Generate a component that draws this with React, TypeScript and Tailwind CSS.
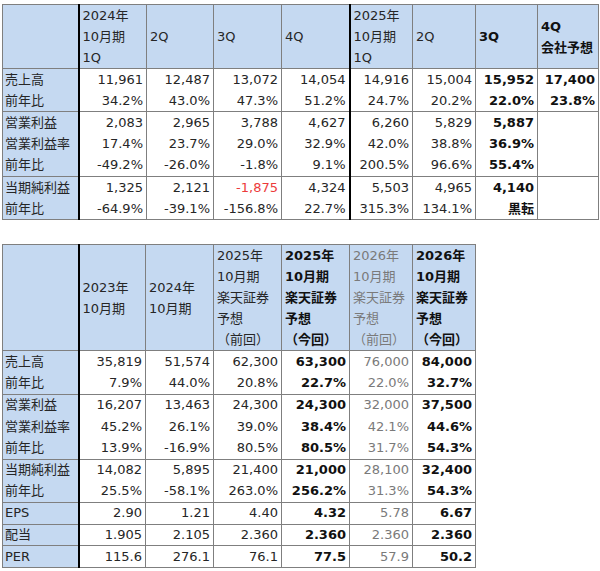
type Cell = string | { v: string; b?: boolean; red?: boolean }

const topCols = [76, 68, 67, 68, 68, 63, 63, 62, 61]
const bottomCols = [76, 67, 68, 68, 68, 63, 63]

const topHead: { lines: string[]; b?: boolean; thick?: boolean }[] = [
  { lines: ['2024年', '10月期', '1Q'] },
  { lines: ['2Q'] },
  { lines: ['3Q'] },
  { lines: ['4Q'], thick: true },
  { lines: ['2025年', '10月期', '1Q'] },
  { lines: ['2Q'] },
  { lines: ['3Q'], b: true },
  { lines: ['4Q', '会社予想'], b: true },
]

const topRows: { label: string; cells: Cell[]; end?: boolean }[] = [
  { label: '売上高', cells: ['11,961', '12,487', '13,072', '14,054', '14,916', '15,004', { v: '15,952', b: true }, { v: '17,400', b: true }] },
  { label: '前年比', cells: ['34.2%', '43.0%', '47.3%', '51.2%', '24.7%', '20.2%', { v: '22.0%', b: true }, { v: '23.8%', b: true }], end: true },
  { label: '営業利益', cells: ['2,083', '2,965', '3,788', '4,627', '6,260', '5,829', { v: '5,887', b: true }, ''] },
  { label: '営業利益率', cells: ['17.4%', '23.7%', '29.0%', '32.9%', '42.0%', '38.8%', { v: '36.9%', b: true }, ''] },
  { label: '前年比', cells: ['-49.2%', '-26.0%', '-1.8%', '9.1%', '200.5%', '96.6%', { v: '55.4%', b: true }, ''], end: true },
  { label: '当期純利益', cells: ['1,325', '2,121', { v: '-1,875', red: true }, '4,324', '5,503', '4,965', { v: '4,140', b: true }, ''] },
  { label: '前年比', cells: ['-64.9%', '-39.1%', '-156.8%', '22.7%', '315.3%', '134.1%', { v: '黒転', b: true }, ''], end: true },
]

const fc = ['2025年', '10月期', '楽天証券', '予想']
const bottomHead: { lines: string[]; b?: boolean; gray?: boolean }[] = [
  { lines: ['2023年', '10月期'] },
  { lines: ['2024年', '10月期'] },
  { lines: [...fc, '（前回）'] },
  { lines: [...fc, '（今回）'], b: true },
  { lines: ['2026年', '10月期', '楽天証券', '予想', '（前回）'], gray: true },
  { lines: ['2026年', '10月期', '楽天証券', '予想', '（今回）'], b: true },
]

const bottomRows: { label: string; v: string[]; end?: boolean }[] = [
  { label: '売上高', v: ['35,819', '51,574', '62,300', '63,300', '76,000', '84,000'] },
  { label: '前年比', v: ['7.9%', '44.0%', '20.8%', '22.7%', '22.0%', '32.7%'], end: true },
  { label: '営業利益', v: ['16,207', '13,463', '24,300', '24,300', '32,000', '37,500'] },
  { label: '営業利益率', v: ['45.2%', '26.1%', '39.0%', '38.4%', '42.1%', '44.6%'] },
  { label: '前年比', v: ['13.9%', '-16.9%', '80.5%', '80.5%', '31.7%', '54.3%'], end: true },
  { label: '当期純利益', v: ['14,082', '5,895', '21,400', '21,000', '28,100', '32,400'] },
  { label: '前年比', v: ['25.5%', '-58.1%', '263.0%', '256.2%', '31.3%', '54.3%'], end: true },
  { label: 'EPS', v: ['2.90', '1.21', '4.40', '4.32', '5.78', '6.67'], end: true },
  { label: '配当', v: ['1.905', '2.105', '2.360', '2.360', '2.360', '2.360'], end: true },
  { label: 'PER', v: ['115.6', '276.1', '76.1', '77.5', '57.9', '50.2'], end: true },
]

const font = { fontFamily: '"DejaVu Sans", "Noto Sans CJK JP", sans-serif' }

function Cols({ widths }: { widths: number[] }) {
  return (
    <colgroup>
      {widths.map((w, i) => (
        <col key={i} style={{ width: w }} />
      ))}
    </colgroup>
  )
}

function TopTable() {
  return (
    <table className="table-fixed border-collapse text-[13px] text-[#262626]" style={{ ...font, width: 596 }}>
      <Cols widths={topCols} />
      <thead>
        <tr>
          <th className="border border-[#7f7f7f] border-r-2 border-r-black bg-[#c5d9f1]" />
          {topHead.map((h, i) => (
            <th
              key={i}
              className={`h-[63px] border border-[#7f7f7f] bg-[#c5d9f1] pl-[3px] text-left align-middle leading-[21px] ${h.b ? 'font-bold text-[#111]' : 'font-normal'} ${h.thick ? 'border-r-2 border-r-black' : ''}`}
            >
              {h.lines.map((l, j) => (
                <div key={j}>{l}</div>
              ))}
            </th>
          ))}
        </tr>
      </thead>
      <tbody>
        {topRows.map((r, i) => (
          <tr key={i}>
            <td className={`h-[21.6px] border-x border-l-[#7f7f7f] border-r-2 border-r-black bg-[#c5d9f1] pl-[2px] leading-[20px] ${r.end ? 'border-b border-b-[#7f7f7f]' : ''}`}>
              {r.label}
            </td>
            {r.cells.map((c, j) => {
              const o = typeof c === 'string' ? { v: c } : c
              return (
                <td
                  key={j}
                  className={`h-[21.6px] border-x border-[#7f7f7f] pr-[3px] text-right leading-[20px] whitespace-nowrap ${o.b ? 'font-bold text-[#111]' : ''} ${o.red ? 'text-[#ec3b3b]' : ''} ${j === 3 ? 'border-r-2 border-r-black' : ''} ${r.end ? 'border-b border-b-[#7f7f7f]' : ''}`}
                >
                  {o.v}
                </td>
              )
            })}
          </tr>
        ))}
      </tbody>
    </table>
  )
}

function BottomTable() {
  return (
    <table className="table-fixed border-collapse text-[13px] text-[#262626]" style={{ ...font, width: 473 }}>
      <Cols widths={bottomCols} />
      <thead>
        <tr>
          <th className="border border-[#7f7f7f] border-r-2 border-r-black bg-[#c5d9f1]" />
          {bottomHead.map((h, i) => (
            <th
              key={i}
              className={`h-[105px] border border-[#7f7f7f] bg-[#c5d9f1] pl-[3px] text-left align-middle leading-[21px] whitespace-nowrap ${h.b ? 'font-bold text-[#111]' : 'font-normal'} ${h.gray ? 'text-[#7a7a7a]' : ''}`}
            >
              {h.lines.map((l, j) => (
                <div key={j}>{l}</div>
              ))}
            </th>
          ))}
        </tr>
      </thead>
      <tbody>
        {bottomRows.map((r, i) => (
          <tr key={i}>
            <td className={`h-[21.7px] border-x border-l-[#7f7f7f] border-r-2 border-r-black bg-[#c5d9f1] pl-[2px] leading-[20px] ${r.end ? 'border-b border-b-[#7f7f7f]' : ''}`}>
              {r.label}
            </td>
            {r.v.map((v, j) => (
              <td
                key={j}
                className={`h-[21.7px] border-x border-[#7f7f7f] pr-[3px] text-right leading-[20px] whitespace-nowrap ${j === 3 || j === 5 ? 'font-bold text-[#111]' : ''} ${j === 4 ? 'text-[#7a7a7a]' : ''} ${r.end ? 'border-b border-b-[#7f7f7f]' : ''}`}
              >
                {v}
              </td>
            ))}
          </tr>
        ))}
      </tbody>
    </table>
  )
}

export default function App() {
  return (
    <div className="min-h-[571px] w-[600px] bg-white pl-[2px] pt-[4px]">
      <TopTable />
      <div className="h-[24px]" />
      <BottomTable />
    </div>
  )
}
